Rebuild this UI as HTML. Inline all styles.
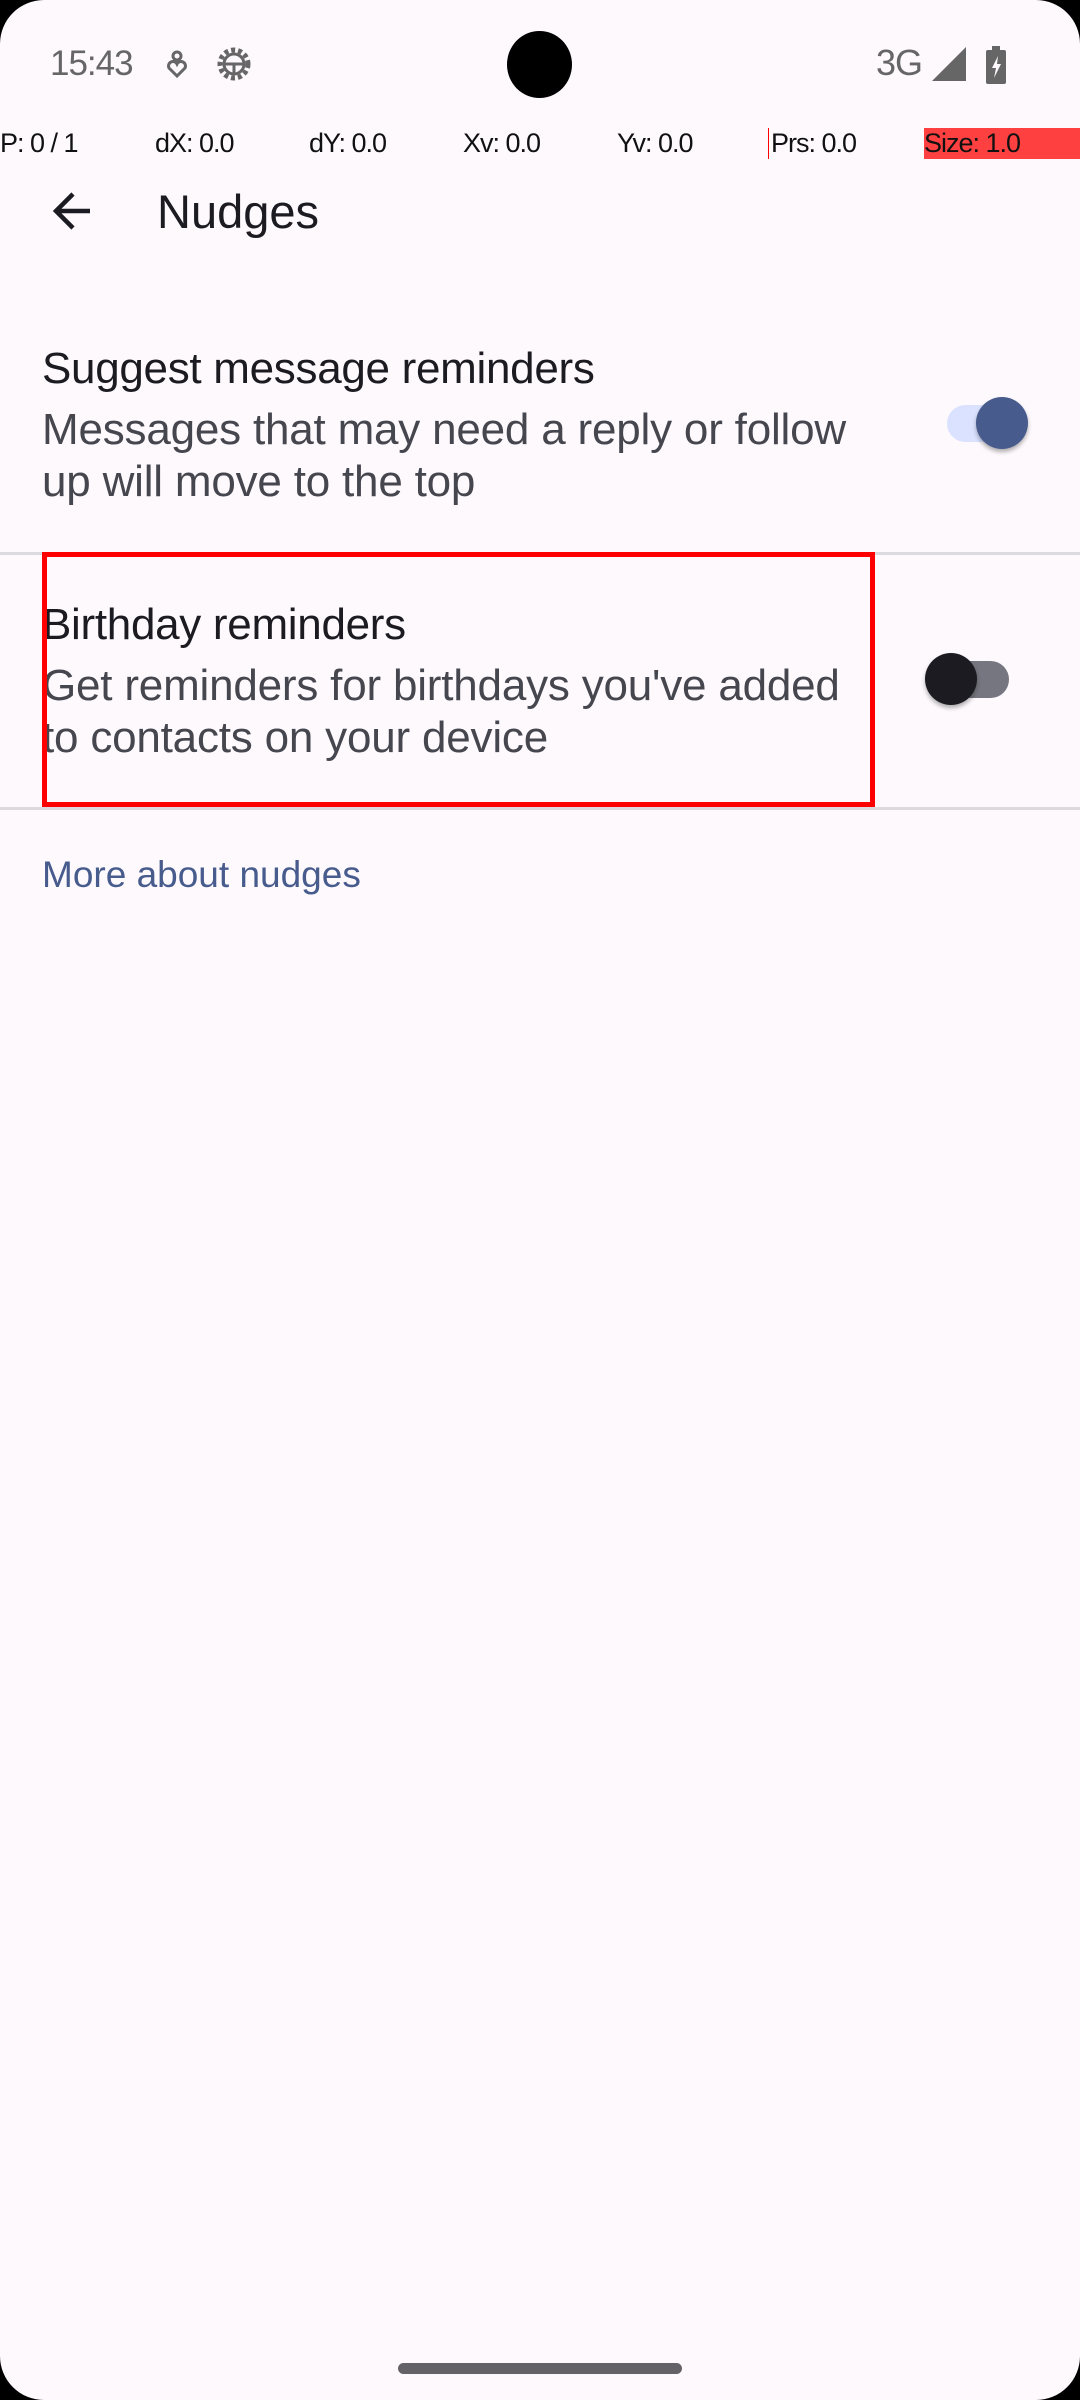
<!DOCTYPE html>
<html><head><meta charset="utf-8"><style>
*{margin:0;padding:0;box-sizing:border-box}
body{width:1080px;height:2400px;background:#000;overflow:hidden;font-family:"Liberation Sans",sans-serif;}
#s{position:absolute;left:0;top:0;width:1080px;height:2400px;background:#fdf9fd;border-radius:44px;overflow:hidden}
.a{position:absolute;white-space:nowrap}
.dbg{position:absolute;top:128px;height:31px;font-size:27px;line-height:31px;color:#111;letter-spacing:-1px}
.t{font-size:44px;color:#1b1b21;letter-spacing:-0.3px}
.sm{font-size:44px;color:#46464f;letter-spacing:-0.2px}
</style></head><body><div id="s">
<div class="a" style="left:50px;top:44px;font-size:35px;color:#666;letter-spacing:-1px">15:43</div>
<svg class="a" style="left:162px;top:50px" width="30" height="30" viewBox="0 0 30 30"><circle cx="15" cy="6" r="4" fill="none" stroke="#666" stroke-width="3"/><path d="M15 26 L7 18 A4 4 0 0 1 15 14 A4 4 0 0 1 23 18 Z" fill="none" stroke="#666" stroke-width="3"/></svg>
<svg class="a" style="left:214px;top:44px" width="40" height="40" viewBox="0 0 40 40"><circle cx="20" cy="20" r="14" fill="none" stroke="#666" stroke-width="5" stroke-dasharray="4 3"/><circle cx="20" cy="20" r="10" fill="none" stroke="#666" stroke-width="3"/><path d="M10 20h20M20 20v10" stroke="#666" stroke-width="3"/></svg>
<div class="a" style="left:507px;top:31px;width:65px;height:67px;border-radius:50%;background:#000"></div>
<div class="a" style="left:876px;top:42px;font-size:36px;color:#666;letter-spacing:-1px">3G</div>
<svg class="a" style="left:932px;top:47px" width="36" height="34"><path d="M0 34 L34 0 V34Z" fill="#666"/></svg>
<svg class="a" style="left:986px;top:46px" width="22" height="38"><rect x="0" y="4" width="20" height="34" rx="2" fill="#666"/><rect x="6" y="0" width="8" height="5" fill="#666"/><path d="M12 10 L6 22 H10 L8 32 L15 18 H11Z" fill="#fdf9fd"/></svg>
<div class="dbg" style="left:0">P: 0 / 1</div>
<div class="dbg" style="left:155px">dX: 0.0</div>
<div class="dbg" style="left:309px">dY: 0.0</div>
<div class="dbg" style="left:463px">Xv: 0.0</div>
<div class="dbg" style="left:617px">Yv: 0.0</div>
<div class="a" style="left:768px;top:128px;width:1px;height:31px;background:#f00"></div>
<div class="dbg" style="left:771px">Prs: 0.0</div>
<div class="dbg" style="left:924px;width:156px;background:#ff4040">Size: 1.0</div>
<svg class="a" style="left:50px;top:188px" width="46" height="46" viewBox="0 0 46 46"><path d="M40 23H8M23 6L6 23L23 40" fill="none" stroke="#1b1b21" stroke-width="4.5"/></svg>
<div class="a" style="left:157px;top:184px;font-size:47px;color:#1b1b21">Nudges</div>
<div class="a t" style="left:42px;top:344px">Suggest message reminders</div>
<div class="a sm" style="left:42px;top:405px">Messages that may need a reply or follow</div>
<div class="a sm" style="left:42px;top:457px">up will move to the top</div>
<div class="a" style="left:947px;top:405px;width:74px;height:37px;border-radius:19px;background:#dae2ff"></div>
<div class="a" style="left:976px;top:397px;width:52px;height:52px;border-radius:50%;background:#475b8d;box-shadow:0 3px 4px rgba(0,0,0,.3)"></div>
<div class="a" style="left:0;top:552px;width:1080px;height:3px;background:#dcdadf"></div>
<div class="a t" style="left:42px;top:600px">Birthday reminders</div>
<div class="a sm" style="left:42px;top:661px">Get reminders for birthdays you've added</div>
<div class="a sm" style="left:42px;top:713px">to contacts on your device</div>
<div class="a" style="left:951px;top:661px;width:58px;height:37px;border-radius:19px;background:#767680"></div>
<div class="a" style="left:925px;top:653px;width:52px;height:52px;border-radius:50%;background:#1b1b21;box-shadow:0 3px 4px rgba(0,0,0,.3)"></div>
<div class="a" style="left:0;top:807px;width:1080px;height:3px;background:#dcdadf"></div>
<div class="a" style="left:42px;top:552px;width:833px;height:255px;border:5px solid #f00"></div>
<div class="a" style="left:42px;top:854px;font-size:37px;color:#475b8d">More about nudges</div>
<div class="a" style="left:398px;top:2363px;width:284px;height:11px;border-radius:6px;background:#646266"></div>
</div></body></html>
